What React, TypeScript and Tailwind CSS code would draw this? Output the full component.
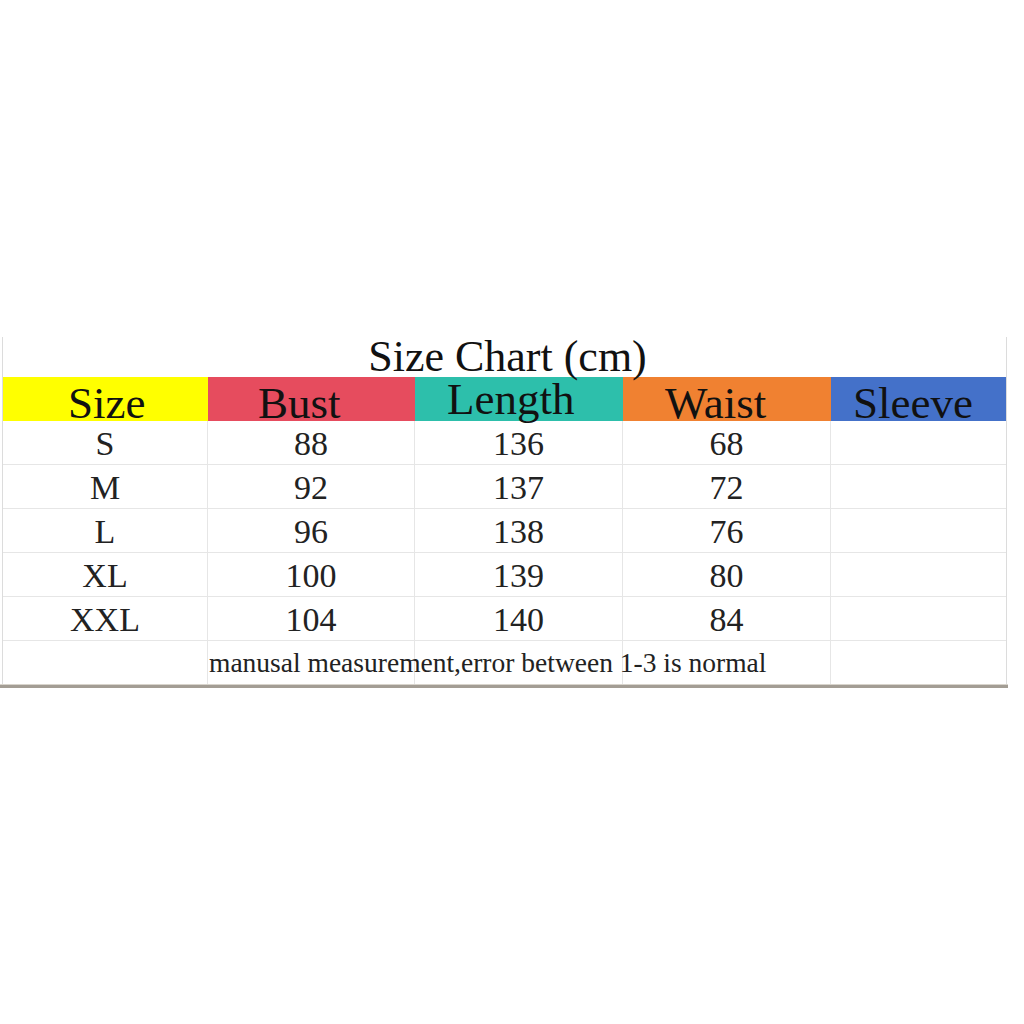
import React from "react";

const rows = [
  ["S", "88", "136", "68"],
  ["M", "92", "137", "72"],
  ["L", "96", "138", "76"],
  ["XL", "100", "139", "80"],
  ["XXL", "104", "140", "84"],
];

export default function App() {
  return (
    <div
      className="w-[1024px] h-[1024px] bg-white text-[#111]"
      style={{ fontFamily: '"Liberation Serif", "Times New Roman", serif' }}
    >
      <div className="pt-[337px] w-[1008px]">
        <div className="ml-[2px] w-[1005px] border-l border-r border-[#dcdcdc]">
          <div className="h-[40px] flex justify-center items-end">
            <div className="text-[44px] leading-none translate-y-[2px] ml-[6px] relative z-10">Size Chart (cm)</div>
          </div>
          <div className="grid grid-cols-[205px_207px_208px_208px_175px] grid-rows-[44px] h-[44px] text-[45px] leading-none overflow-visible">
            <div className="bg-[#ffff00] flex items-end justify-start pl-[65px] overflow-visible">
              <span className="translate-y-[5px]">Size</span>
            </div>
            <div className="bg-[#e64c5e] flex items-end justify-start pl-[50px] overflow-visible">
              <span className="translate-y-[5px]">Bust</span>
            </div>
            <div className="bg-[#2dbfab] flex items-end justify-start pl-[32px] overflow-visible">
              <span className="translate-y-[1px]">Length</span>
            </div>
            <div className="bg-[#f08131] flex items-end justify-start pl-[42px] overflow-visible">
              <span className="translate-y-[5px]">Waist</span>
            </div>
            <div className="bg-[#4471c9] flex items-end justify-start pl-[22px] overflow-visible">
              <span className="translate-y-[5px]">Sleeve</span>
            </div>
          </div>
          {rows.map((r) => (
            <div
              key={r[0]}
              className="grid grid-cols-[205px_207px_208px_208px_175px] grid-rows-[43px] h-[44px] border-b border-[#e6e6e6] text-[34px] leading-none text-[#222]"
            >
              {r.map((c, i) => (
                <div key={i} className="flex items-center justify-center border-r border-[#e6e6e6] pt-[2px]">
                  {c}
                </div>
              ))}
              <div />
            </div>
          ))}
          <div className="relative grid grid-cols-[205px_207px_208px_208px_175px] grid-rows-[43px] h-[43px] text-[27.5px] leading-none text-[#222]">
            <div className="border-r border-[#e6e6e6]" />
            <div className="border-r border-[#e6e6e6]" />
            <div className="border-r border-[#e6e6e6]" />
            <div className="border-r border-[#e6e6e6]" />
            <div />
            <div className="absolute left-[206px] top-[8px] whitespace-nowrap">
              manusal measurement,error between 1-3 is normal
            </div>
          </div>
        </div>
        <div className="h-[1px] bg-[#d8d4cc]" />
        <div className="h-[3px] bg-[#a39d94]" />
      </div>
    </div>
  );
}
